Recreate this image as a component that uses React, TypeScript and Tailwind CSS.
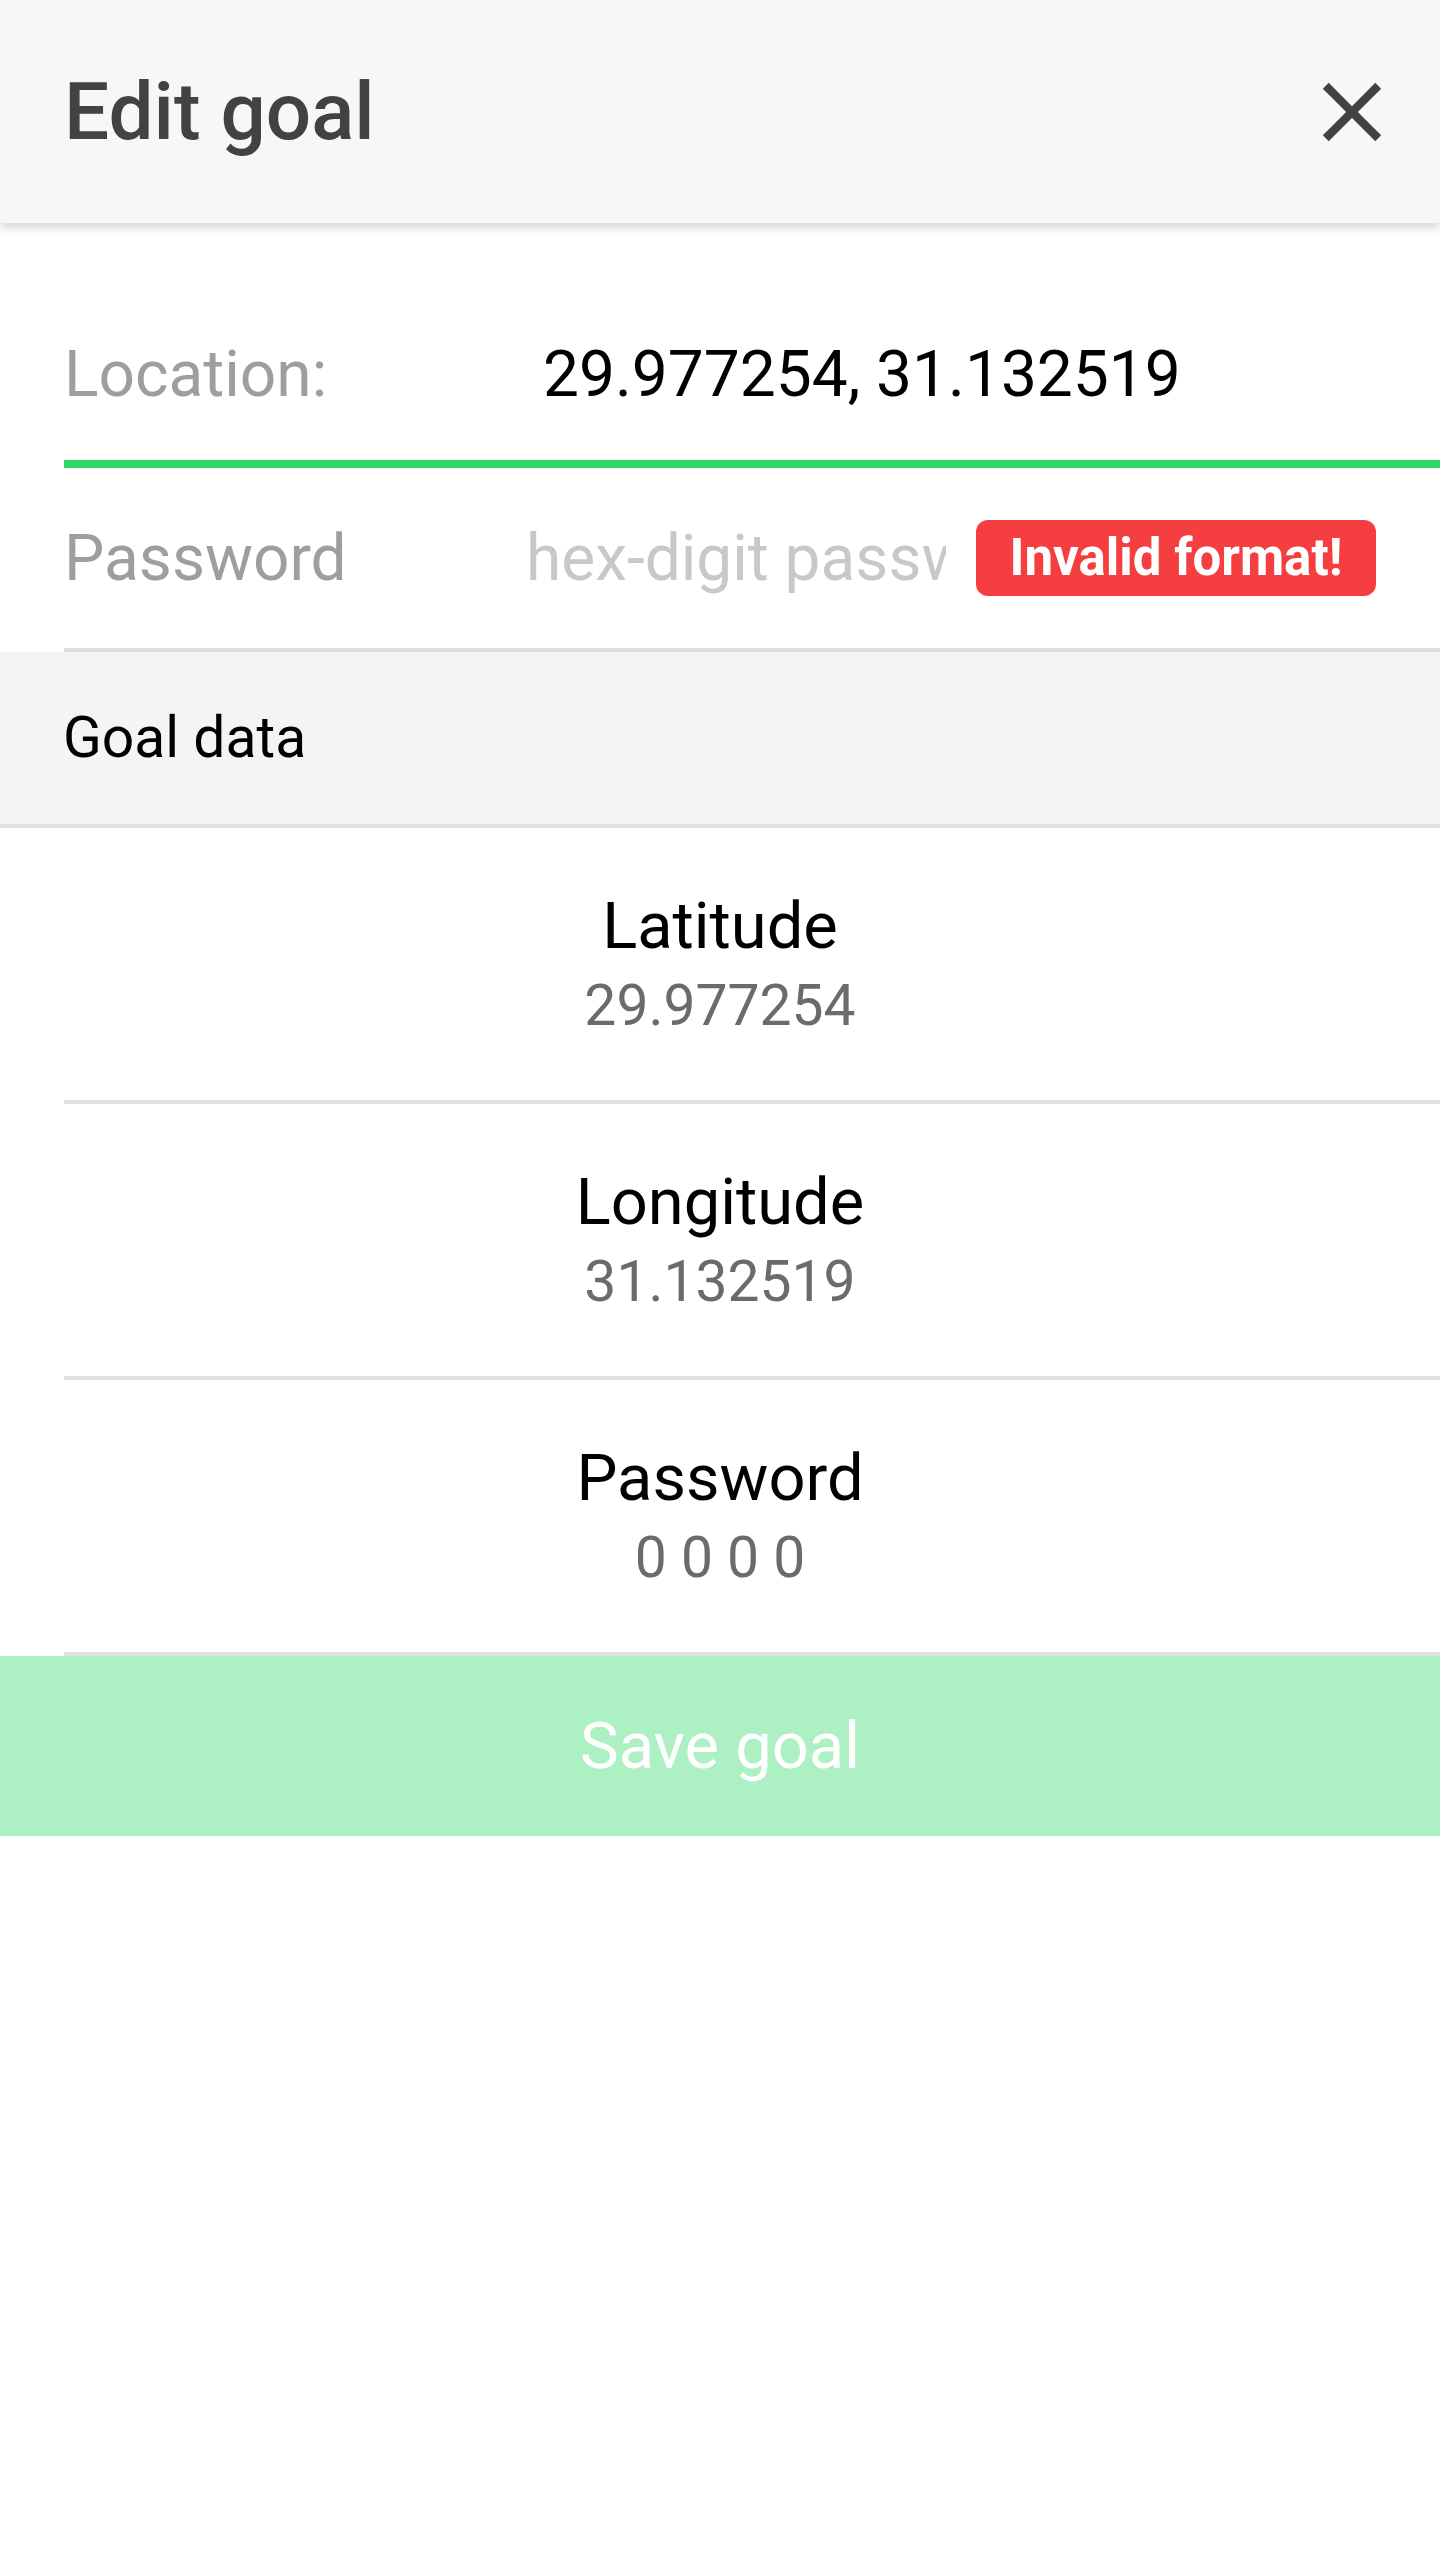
export default function App() {
  const rows = [
    { label: 'Latitude', value: '29.977254' },
    { label: 'Longitude', value: '31.132519' },
    { label: 'Password', value: '0 0 0 0' },
  ]

  return (
    <div className="w-full min-h-[2560px] bg-white font-['Roboto',sans-serif]">
      {/* header */}
      <div className="relative z-10 h-[223px] bg-[#f7f7f7] flex items-center justify-between pl-[64px] pr-[38px] shadow-[0_4px_10px_rgba(0,0,0,0.18)]">
        <h1 className="text-[80px] leading-[94px] font-medium text-[#424242]">Edit goal</h1>
        <svg viewBox="0 0 24 24" className="w-[100px] h-[100px] fill-[#424242]">
          <path d="M19 6.41L17.59 5 12 10.59 6.41 5 5 6.41 10.59 12 5 17.59 6.41 19 12 13.41 17.59 19 19 17.59 13.41 12z" />
        </svg>
      </div>

      {/* form */}
      <div className="mt-[65px] ml-[64px] h-[180px] flex items-center border-b-[8px] border-[#33d669]">
        <div className="w-[462px] text-[64px] leading-[77px] text-[#9e9e9e]">Location:</div>
        <div className="pl-[17px] text-[64px] leading-[77px] text-black">29.977254, 31.132519</div>
      </div>

      <div className="ml-[64px] h-[184px] flex items-center border-b-4 border-[#dedede]">
        <div className="w-[462px] shrink-0 text-[64px] leading-[77px] text-[#9e9e9e]">Password</div>
        <input
          type="text"
          placeholder="hex-digit password"
          className="w-[420px] shrink-0 bg-transparent outline-none text-[64px] leading-[77px] text-black placeholder:text-[#c8c8c8]"
        />
        <div className="ml-[30px] w-[400px] h-[76px] shrink-0 rounded-[12px] bg-[#f53e3f] flex items-center justify-center">
          <span className="text-[51px] leading-[64px] font-bold text-white">Invalid format!</span>
        </div>
      </div>

      {/* goal data */}
      <div className="h-[176px] bg-[#f4f4f4] border-b-4 border-[#e0e0e0] flex items-center pl-[63px]">
        <span className="text-[57px] leading-[68px] text-black">Goal data</span>
      </div>

      {rows.map((r) => (
        <div key={r.label}>
          <div className="h-[272px] flex flex-col items-center justify-center">
            <div className="text-[65px] leading-[77px] text-black">{r.label}</div>
            <div className="mt-[7px] text-[57px] leading-[68px] text-[#6b6b6b]">{r.value}</div>
          </div>
          <div className="ml-[64px] h-[4px] bg-[#e0e0e0]" />
        </div>
      ))}

      <button className="w-full h-[180px] bg-[#adf0c3] text-[65px] leading-[77px] text-white">
        Save goal
      </button>
    </div>
  )
}
